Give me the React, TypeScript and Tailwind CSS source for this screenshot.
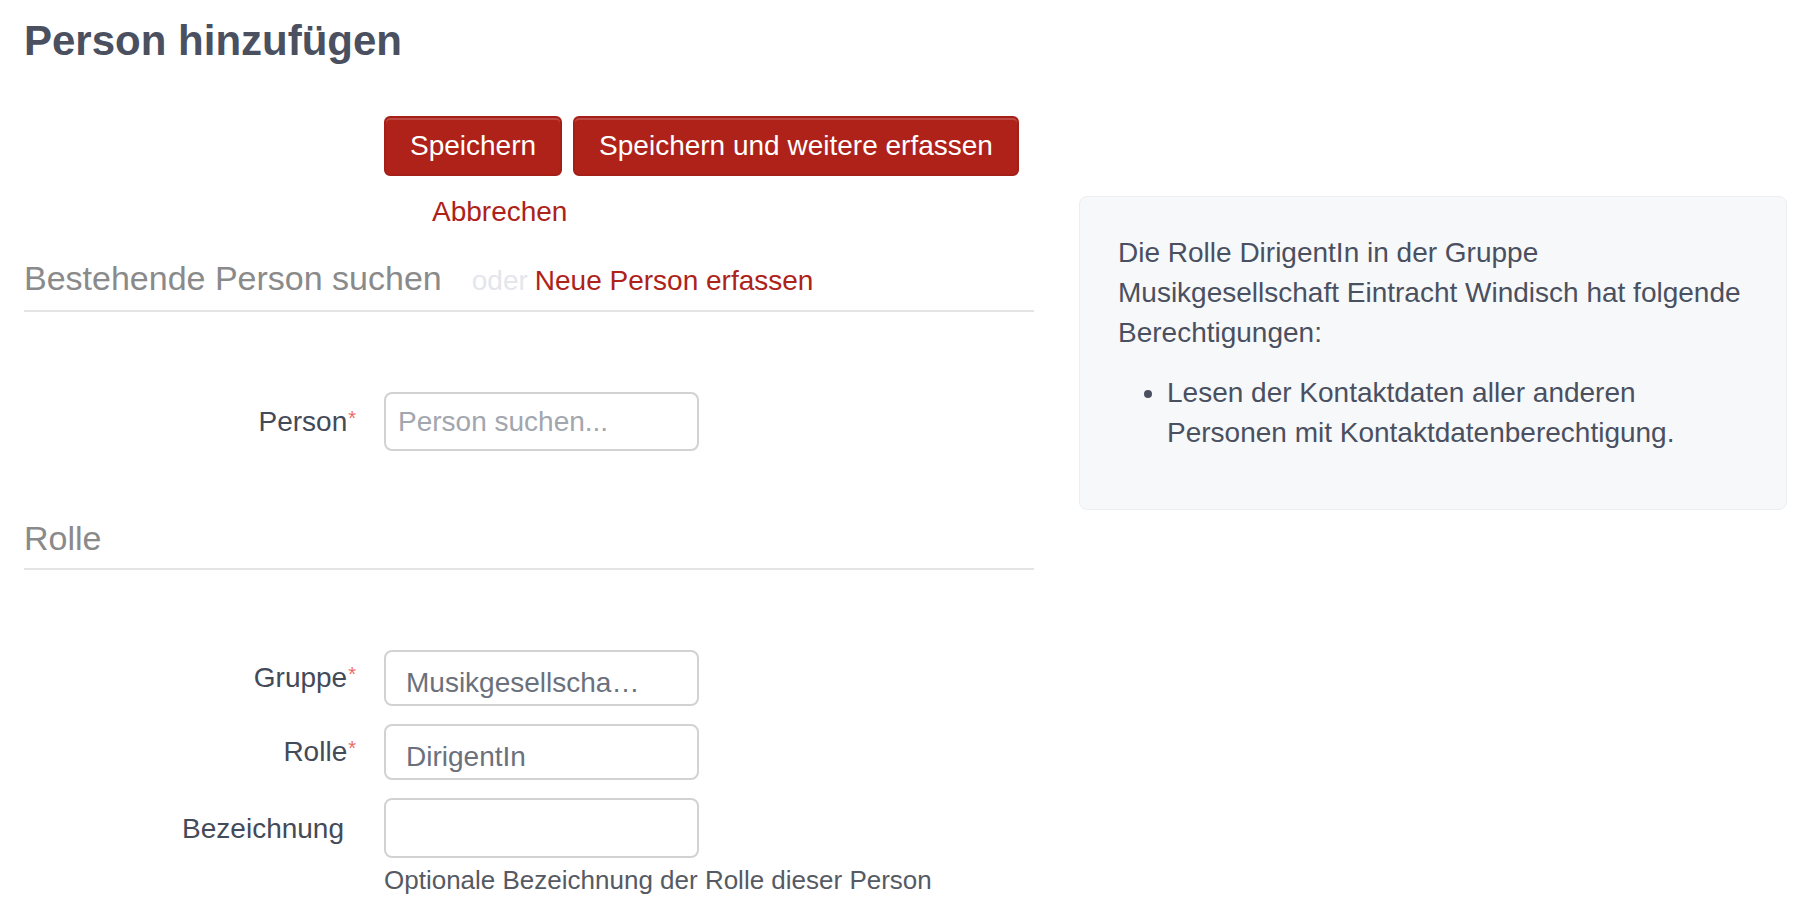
import React from "react";

const font = { fontFamily: '"Liberation Sans", Arial, Helvetica, sans-serif' };

function Req() {
  return <span className="relative -top-[6px] ml-[1px] text-[20px] text-[#ee6b6b]">*</span>;
}

function Row({
  label,
  required,
  children,
}: {
  label: string;
  required?: boolean;
  children: React.ReactNode;
}) {
  return (
    <div className="flex items-center">
      <div
        className={
          "w-[332px] shrink-0 pt-[2px] text-right text-[28px] leading-[40px] text-[#434a58] " +
          (required ? "" : "pr-[12px]")
        }
      >
        {label}
        {required && <Req />}
      </div>
      <div className="ml-[28px]">{children}</div>
    </div>
  );
}

export default function App() {
  return (
    <div className="min-h-[920px] bg-white pl-[24px] pr-[21px]" style={font}>
      <h1 className="pt-[17px] text-[42px] font-bold leading-[48px] text-[#4a5060]">
        Person hinzufügen
      </h1>

      <div className="mt-[51px] flex items-start gap-[45px]">
        {/* left column */}
        <div className="w-[1010px] shrink-0">
          <div className="flex gap-[11px] pl-[360px]">
            <button className="h-[60px] rounded-[6px] border-2 border-[#a31f17] bg-[#af2219] px-[24px] text-[28px] leading-[40px] text-white shadow-[inset_0_2px_0_rgba(255,255,255,0.18)]">
              Speichern
            </button>
            <button className="h-[60px] rounded-[6px] border-2 border-[#a31f17] bg-[#af2219] px-[24px] text-[28px] leading-[40px] text-white shadow-[inset_0_2px_0_rgba(255,255,255,0.18)]">
              Speichern und weitere erfassen
            </button>
          </div>
          <div className="mt-[16px] pl-[408px] text-[28px] leading-[40px] text-[#ad2219]">
            Abbrechen
          </div>

          {/* Section: Bestehende Person */}
          <div className="mt-[26px] flex items-baseline border-b-2 border-[#e4e4e4] pb-[9px]">
            <span className="text-[34px] leading-[40px] text-[#8a8a8a]">
              Bestehende Person suchen
            </span>
            <span className="ml-[30px] text-[28px] leading-[40px] text-[#e4e6ec]">oder</span>
            <span className="ml-[7px] text-[28px] leading-[40px] text-[#ad2219]">
              Neue Person erfassen
            </span>
          </div>

          <div className="mt-[80px]">
            <Row label="Person" required>
              <input
                readOnly
                placeholder="Person suchen..."
                className="h-[59px] w-[315px] rounded-[8px] border-2 border-[#d2d2d2] bg-white px-[12px] text-[28px] text-[#6b717c] outline-none placeholder:text-[#a2a6ae]"
                style={font}
              />
            </Row>
          </div>

          {/* Section: Rolle */}
          <div className="mt-[67px] border-b-2 border-[#e4e4e4] pb-[10px]">
            <span className="text-[34px] leading-[40px] text-[#8a8a8a]">Rolle</span>
          </div>

          <div className="mt-[80px] flex flex-col gap-[18px]">
            <Row label="Gruppe" required>
              <div className="flex h-[56px] w-[315px] items-center overflow-hidden whitespace-nowrap rounded-[8px] border-2 border-[#d2d2d2] bg-white px-[20px] pt-[10px] text-[28px] text-[#6b717c]">
                Musikgesellscha…
              </div>
            </Row>
            <Row label="Rolle" required>
              <div className="flex h-[56px] w-[315px] items-center overflow-hidden whitespace-nowrap rounded-[8px] border-2 border-[#d2d2d2] bg-white px-[20px] pt-[10px] text-[28px] text-[#6b717c]">
                DirigentIn
              </div>
            </Row>
            <div>
              <Row label="Bezeichnung">
                <input
                  readOnly
                  className="h-[60px] w-[315px] rounded-[8px] border-2 border-[#d2d2d2] bg-white px-[12px] text-[28px] outline-none"
                  style={font}
                />
              </Row>
              <div className="mt-[2px] pl-[360px] text-[26px] leading-[40px] text-[#555a63]">
                Optionale Bezeichnung der Rolle dieser Person
              </div>
            </div>
          </div>
        </div>

        {/* right panel */}
        <aside className="mt-[80px] w-[708px] shrink-0 rounded-[8px] border border-[#eceef2] bg-[#f7f8fa] px-[38px] py-[36px] text-[28px] leading-[40px] text-[#4a5060]">
          <p className="mb-[20px]">
            Die Rolle DirigentIn in der Gruppe Musikgesellschaft Eintracht Windisch hat folgende
            Berechtigungen:
          </p>
          <ul className="mb-[20px] list-disc pl-[49px]">
            <li>Lesen der Kontaktdaten aller anderen Personen mit Kontaktdatenberechtigung.</li>
          </ul>
        </aside>
      </div>
    </div>
  );
}
